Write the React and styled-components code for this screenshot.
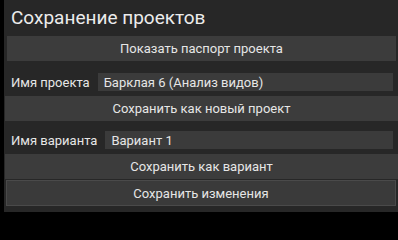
import styled, { createGlobalStyle } from 'styled-components';

const GlobalStyle = createGlobalStyle`
  html, body {
    margin: 0;
    padding: 0;
    height: 100%;
    overflow: hidden;
    background: #000;
  }
  body {
    font-family: Roboto, "Liberation Sans", sans-serif;
  }
`

const StylePanel = styled.section`
  margin-left: 4px;
  width: 394px;
  height: 212px;
  box-sizing: border-box;
  background: #272727;
  color: #e4e4e4;
  display: flex;
  flex-direction: column;
  padding-bottom: 6px;
`
const StyleTitle = styled.h1`
  margin: 0;
  height: 36px;
  padding: 0 0 1px 7px;
  box-sizing: border-box;
  display: flex;
  align-items: center;
  font-size: 19px;
  font-weight: 400;
  color: #ececec;
`
const StyleButton = styled.button`
  display: flex;
  align-items: center;
  justify-content: center;
  height: ${({ $bordered }) => ($bordered ? '26px' : '25px')};
  margin: ${({ $inset, $bordered }) =>
    $bordered ? '1px 2px 0 2px' : $inset ? '0 2px 0 3px' : '0 0 0 1px'};
  padding: 0;
  box-sizing: border-box;
  border: ${({ $bordered }) => ($bordered ? '1px solid #4a4a4a' : 'none')};
  background: ${({ $bordered }) => ($bordered ? '#3a3a3a' : '#3c3c3c')};
  color: #e6e6e6;
  font-family: inherit;
  font-size: 13px;
  cursor: pointer;
`
const StyleRow = styled.div`
  display: flex;
  align-items: center;
  gap: 8px;
  padding: ${({ $top }) => `${$top}px 5px 5px 7px`};
`
const StyleLabel = styled.span`
  font-size: 13px;
  color: #e6e6e6;
  white-space: nowrap;
`
const StyleInput = styled.div`
  flex: 1;
  height: 18px;
  display: flex;
  align-items: center;
  padding-left: 6px;
  background: #3b3b3b;
  font-size: 13px;
  color: #e6e6e6;
`

export default function App() {
  return (
    <>
      <GlobalStyle />
      <StylePanel>
        <StyleTitle>Сохранение проектов</StyleTitle>
        <StyleButton $inset>Показать паспорт проекта</StyleButton>
        <StyleRow $top={12}>
          <StyleLabel>Имя проекта</StyleLabel>
          <StyleInput>Барклая 6 (Анализ видов)</StyleInput>
        </StyleRow>
        <StyleButton>Сохранить как новый проект</StyleButton>
        <StyleRow $top={10}>
          <StyleLabel>Имя варианта</StyleLabel>
          <StyleInput>Вариант 1</StyleInput>
        </StyleRow>
        <StyleButton>Сохранить как вариант</StyleButton>
        <StyleButton $bordered>Сохранить изменения</StyleButton>
      </StylePanel>
    </>
  )
}
